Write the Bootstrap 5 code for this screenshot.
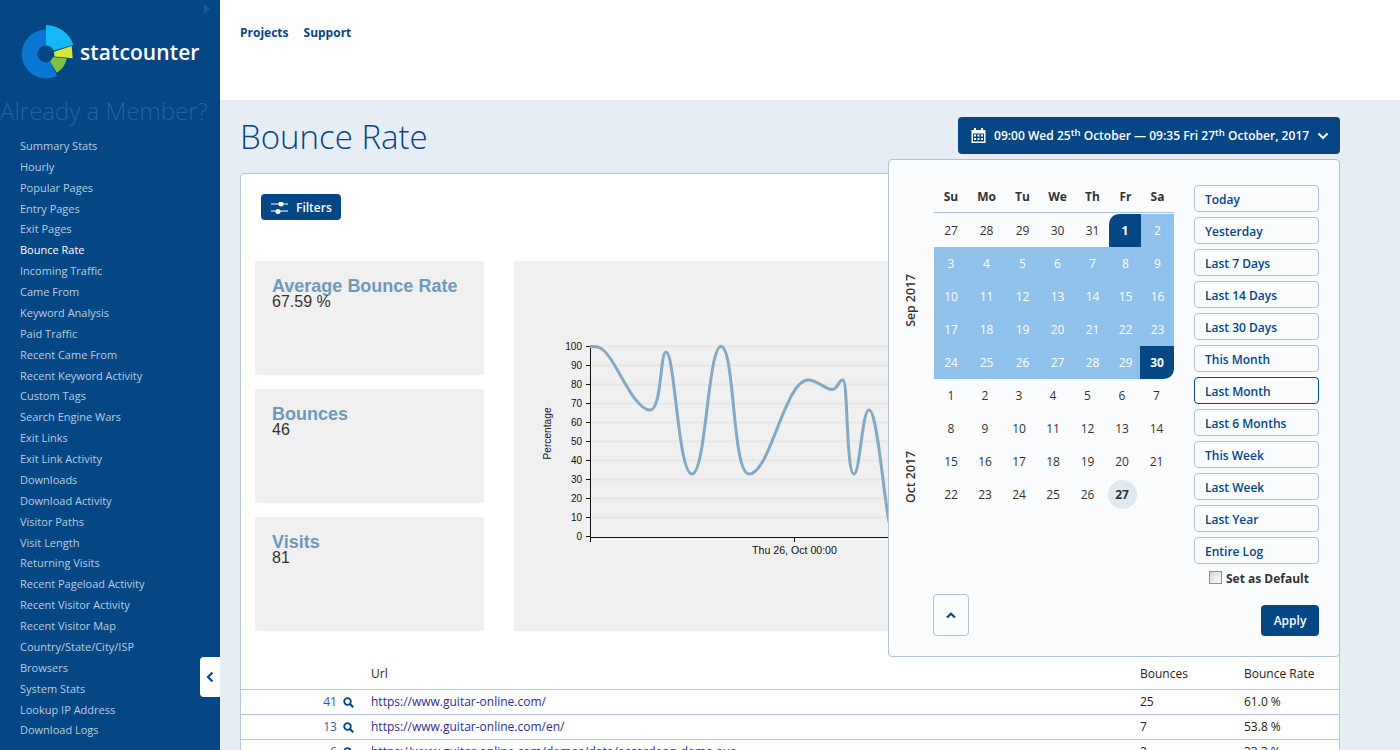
<!DOCTYPE html>
<html lang="en"><head><meta charset="utf-8"><title>Bounce Rate</title>
<link href="https://cdn.jsdelivr.net/npm/bootstrap@5.3.0/dist/css/bootstrap.min.css" rel="stylesheet">
<script src="https://cdn.jsdelivr.net/npm/bootstrap@5.3.0/dist/js/bootstrap.bundle.min.js"></script>
<style>
html,body{height:750px;overflow:hidden}
body{font-family:"Open Sans","Noto Sans",sans-serif;font-size:12px;color:#333;background:#e6edf4}
.shell{height:750px}
.side{width:220px;flex:none;background:#054685;position:relative;height:750px}
.side-arrow{position:absolute;left:204px;top:4px;width:0;height:0;border-left:6px solid #1d5a94;border-top:5.5px solid transparent;border-bottom:5.5px solid transparent}
.brand{height:80px;padding:24px 0 0 21px}
.brand-name{font-size:21px;font-weight:600;color:#fff;margin-left:6px;line-height:1;letter-spacing:.1px}
.member{font-size:24px;font-weight:300;color:#26639e;line-height:34px;margin:14px 0 0;white-space:nowrap}
.side-nav{margin:7.900px 0 0;padding:0 0 0 20px;list-style:none}
.side-nav a{display:block;height:20.89px;line-height:20.89px;font-size:11px;color:#b9cde0;text-decoration:none;white-space:nowrap}
.side-nav a.on{color:#fff}
.tab-toggle{position:absolute;left:200px;top:657px;width:20px;height:40px;background:#fff;border-radius:4px 0 0 4px}
.main{flex:1;min-width:0}
.top{height:100px;background:#fff;padding:24px 0 0 20px;gap:15px}
.top a{font-weight:700;font-size:12px;color:#054685;text-decoration:none;line-height:17px}
.body-wrap{padding:0 60px 0 20px;position:relative}
.title-row{height:73px;padding-top:17px}
.title-row h1{font-size:33px;font-weight:300;color:#054685;margin:0;line-height:40px}
.range-btn{width:382px;height:37px;background:#054685;color:#fff;border-radius:4px;font-size:12.050px;font-weight:600;border:0;padding:0 0 0 13px;gap:8px;white-space:nowrap}
.range-text{padding-top:2px}
.range-btn sup{font-size:9.500px;top:-.5em}
.panel{background:#fff;border:1px solid #b3c6de;border-radius:4px 4px 0 0;height:600px;padding:20px 0 0}
.filter-btn{margin-left:20px;width:80px;height:26px;background:#054685;color:#fff;border:0;border-radius:4px;font-size:12px;font-weight:600;padding:1px 0 0 10px;gap:8px}
.stat-row{margin:41px 0 0 14px;gap:30px}
.stat-col{width:229px;gap:14px}
.stat-box{height:114px;background:#f0f0f0;padding:16px 17px;font-family:"Liberation Sans",Arial,sans-serif;border-radius:2px}
.stat-box h5{font-size:18px;font-weight:700;color:#7099b8;margin:0;line-height:18px}
.stat-box p{font-size:16px;color:#333;margin:0;line-height:13px}
.chart-box{width:806px;height:370px;background:#f0f0f0;border-radius:2px}
.chart-box svg{display:block}
.chart-box text{font-family:"Liberation Sans",Arial,sans-serif;font-size:10px;fill:#111}
.chart-box text.xlab{font-size:10.600px}
.chart-box text.ylab{font-size:10.200px;fill:#14143a}
.data-table{margin:29px 0 0;font-size:12px;width:1098px;table-layout:fixed;--bs-table-bg:transparent}
.data-table th,.data-table td{height:25px;padding:0;border-bottom:1px solid #b3c6de;vertical-align:middle;font-weight:400;color:#222;white-space:nowrap;line-height:24px}
.data-table th{height:29px}
.data-table td.num-cell{text-align:right;padding-right:17px}
.num-cell a{color:#2c5f96;text-decoration:none}
.num-cell svg{margin-left:3px}
.url-cell a{color:#322c8e;text-decoration:none}
.popper{position:absolute;left:668px;top:59px;width:452px;height:498px;background:#fbfcfe;border:1px solid #adc2dc;border-radius:4px;padding:25px 20px 20px 45px;z-index:5}
.vlabel{position:absolute;left:13px;writing-mode:vertical-rl;transform:rotate(180deg);font-size:12.300px;font-weight:600;color:#333;white-space:nowrap;line-height:18px}
.cal{width:240px;position:relative}
.grid-sep,.grid-oct{display:grid;height:33px;align-items:stretch}
.grid-sep{grid-template-columns:34px 37px 35px 35px 35px 31px 33px}
.grid-oct{grid-template-columns:34px 34px 34px 34px 35px 34px 35px}
.dow{height:28px;border-bottom:1px solid #adc2dc;font-weight:700;color:#333;font-size:12px;margin-bottom:1px}
.dow span{display:flex;align-items:flex-start;justify-content:center;line-height:18px;padding-top:3px}
.cell{display:flex;align-items:center;justify-content:center;color:#333;font-size:12px}
.inr{background:#90c1ea;color:#fff}
.edge-a{background:#054685;color:#fff;font-weight:700;border-top-left-radius:10px;margin-left:-1px}
.edge-b{background:#054685;color:#fff;font-weight:700;border-bottom-right-radius:10px;margin-left:-1px}
.today{position:relative;font-weight:700;z-index:0}
.today::before{content:"";position:absolute;left:50%;top:50%;width:29px;height:29px;margin:-14.500px 0 0 -14.500px;border-radius:50%;background:#e0e8f1;z-index:-1}
.presets{width:125px;gap:5px;margin-left:20px}
.preset{display:block;width:125px;height:27px;background:#fbfcfe;border:1px solid #adc2dc;border-radius:4px;color:#054685;font-size:12px;font-weight:600;text-align:left;padding:0 0 0 10px;line-height:28px;text-decoration:none}
.preset.sel{border-color:#054685}
.def-row{font-size:12px;font-weight:700;color:#333;gap:4px;margin:1px 0 0 15px;line-height:18px}
.def-box{width:13px;height:13px;border:1px solid #8f8f8f;background:linear-gradient(135deg,#d4d4d4,#fff);margin-top:-3px}
.up-btn{position:absolute;left:44px;top:434px;width:36px;height:42px;border:1px solid #adc2dc;border-radius:4px;background:#fbfcfe}
.apply-btn{position:absolute;left:372px;top:445px;width:58px;height:31px;background:#054685;color:#fff;border:0;border-radius:4px;font-size:12px;font-weight:600;padding:0}
</style></head>
<body>
<div class="d-flex shell">
<aside class="side">
  <div class="side-arrow"></div>
  <div class="brand d-flex align-items-center">
    <svg width="53" height="56" viewBox="21 24 53 56"><path d="M46 29.500A24.500 24.500 0 1 0 57 76L50 61.500A8.500 8.500 0 1 1 46 45.500Z" fill="#0a78d2"/><path d="M46 25A29 29 0 0 1 73.300 45L53.500 50.500A8.500 8.500 0 0 0 46 45.500Z" fill="#13b9f5"/><path d="M54 51.700L71.700 46 72.700 58.300 54.500 56.500Z" fill="#d6e63a"/><path d="M50 61.500L53.300 57 66.700 58.500A21 21 0 0 1 56.700 72.700Z" fill="#7dc242"/></svg>
    <span class="brand-name">statcounter</span>
  </div>
  <div class="member">Already a Member?</div>
  <ul class="side-nav">
    <li><a href="#">Summary Stats</a></li><li><a href="#">Hourly</a></li><li><a href="#">Popular Pages</a></li><li><a href="#">Entry Pages</a></li><li><a href="#">Exit Pages</a></li><li><a href="#" class="on">Bounce Rate</a></li><li><a href="#">Incoming Traffic</a></li><li><a href="#">Came From</a></li><li><a href="#">Keyword Analysis</a></li><li><a href="#">Paid Traffic</a></li><li><a href="#">Recent Came From</a></li><li><a href="#">Recent Keyword Activity</a></li><li><a href="#">Custom Tags</a></li><li><a href="#">Search Engine Wars</a></li><li><a href="#">Exit Links</a></li><li><a href="#">Exit Link Activity</a></li><li><a href="#">Downloads</a></li><li><a href="#">Download Activity</a></li><li><a href="#">Visitor Paths</a></li><li><a href="#">Visit Length</a></li><li><a href="#">Returning Visits</a></li><li><a href="#">Recent Pageload Activity</a></li><li><a href="#">Recent Visitor Activity</a></li><li><a href="#">Recent Visitor Map</a></li><li><a href="#">Country/State/City/ISP</a></li><li><a href="#">Browsers</a></li><li><a href="#">System Stats</a></li><li><a href="#">Lookup IP Address</a></li><li><a href="#">Download Logs</a></li>
  </ul>
  <div class="tab-toggle d-flex align-items-center justify-content-center"><svg width="8" height="12" viewBox="0 0 8 12"><path d="M6.500 1.500L2 6l4.500 4.500" fill="none" stroke="#054685" stroke-width="2.200"/></svg></div>
</aside>
<div class="main">
  <nav class="top d-flex align-items-start"><a href="#">Projects</a><a href="#">Support</a></nav>
  <div class="body-wrap">
    <div class="title-row d-flex justify-content-between align-items-start">
      <h1>Bounce Rate</h1>
      <button class="range-btn d-flex align-items-center" type="button">
        <svg width="15" height="15" viewBox="0 0 15 15"><path fill="#fff" fill-rule="evenodd" d="M3 0h2v2h5V0h2v2h2.500v13H.5V2H3zM2 5.500v8h11v-8z"/><path fill="#fff" d="M3 6.500h2v2H3zM6.500 6.500h2v2h-2zM10 6.500h2v2h-2zM3 10h2v2H3zM6.500 10h2v2h-2zM10 10h2v2h-2z"/></svg>
        <span class="range-text">09:00 Wed 25<sup>th</sup> October — 09:35 Fri 27<sup>th</sup> October, 2017</span>
        <svg width="12" height="8" viewBox="0 0 12 8"><path d="M1.500 1.500L6 6l4.500-4.500" fill="none" stroke="#fff" stroke-width="2"/></svg>
      </button>
    </div>
    <section class="panel">
      <button class="filter-btn d-flex align-items-center" type="button">
        <svg width="17" height="12" viewBox="0 0 17 12"><path d="M0 2h17M0 9h17" stroke="#fff" stroke-width="1"/><circle cx="10" cy="2" r="2.500" fill="#fff"/><circle cx="7" cy="9.500" r="2.500" fill="#fff"/></svg>
        <span>Filters</span>
      </button>
      <div class="stat-row d-flex">
        <div class="stat-col d-flex flex-column">
          <div class="stat-box"><h5>Average Bounce Rate</h5><p>67.59 %</p></div>
          <div class="stat-box"><h5>Bounces</h5><p>46</p></div>
          <div class="stat-box"><h5>Visits</h5><p>81</p></div>
        </div>
        <div class="chart-box">
          <svg width="806" height="370" viewBox="514 261 806 370">
            <g stroke="#e6e6e6" stroke-width="2"><path d="M590 346.500H1300M590 365.500H1300M590 384.500H1300M590 403.500H1300M590 422.500H1300M590 441.500H1300M590 460.500H1300M590 479.500H1300M590 498.500H1300M590 517.500H1300"/></g>
            <path d="M590.500 346V537.500H1300M590.500 537V542M794.500 537V542" fill="none" stroke="#111" stroke-width="1"/>
            <g stroke="#111" stroke-width="1"><path d="M586 346.500h4M586 365.500h4M586 384.500h4M586 403.500h4M586 422.500h4M586 441.500h4M586 460.500h4M586 479.500h4M586 498.500h4M586 517.500h4M586 536.500h4"/></g>
            <g text-anchor="end"><text x="582" y="350">100</text><text x="582" y="369">90</text><text x="582" y="388">80</text><text x="582" y="407">70</text><text x="582" y="426">60</text><text x="582" y="445">50</text><text x="582" y="464">40</text><text x="582" y="483">30</text><text x="582" y="502">20</text><text x="582" y="521">10</text><text x="582" y="540">0</text></g>
            <text class="ylab" transform="translate(551 433.500) rotate(-90)" text-anchor="middle">Percentage</text>
            <text class="xlab" x="794.500" y="553.500" text-anchor="middle">Thu 26, Oct 00:00</text>
            <path d="M590 346.500C596 346.500 601 345 610 358C620 372 636 410 650 410C662 410 660 352 666 352C675 352 678 474 692 474C706 474 708 346.500 721 346.500C735 346.500 732 474 749 474C770 474 785 380 808 380C818 380 825 389.500 832 389.500C838 389.500 838 380 843 380C848 380 846 474 854 474C860 474 862 410 869 410C877 410 883 490 889 522" fill="none" stroke="#84a9c3" stroke-width="3"/>
          </svg>
        </div>
      </div>
      <table class="table data-table">
        <colgroup><col style="width:130px"><col style="width:769px"><col style="width:104px"><col></colgroup>
        <thead><tr><th></th><th>Url</th><th>Bounces</th><th>Bounce Rate</th></tr></thead>
        <tbody>
          <tr><td class="num-cell"><a href="#">41</a> <svg width="11" height="11" viewBox="0 0 11 11"><circle cx="4.500" cy="4.500" r="3.300" fill="none" stroke="#054685" stroke-width="1.800"/><path d="M7 7l3.200 3.200" stroke="#054685" stroke-width="2.200"/></svg></td><td class="url-cell"><a href="#">https://www.guitar-online.com/</a></td><td>25</td><td>61.0 %</td></tr>
          <tr><td class="num-cell"><a href="#">13</a> <svg width="11" height="11" viewBox="0 0 11 11"><circle cx="4.500" cy="4.500" r="3.300" fill="none" stroke="#054685" stroke-width="1.800"/><path d="M7 7l3.200 3.200" stroke="#054685" stroke-width="2.200"/></svg></td><td class="url-cell"><a href="#">https://www.guitar-online.com/en/</a></td><td>7</td><td>53.8 %</td></tr>
          <tr><td class="num-cell"><a href="#">6</a> <svg width="11" height="11" viewBox="0 0 11 11"><circle cx="4.500" cy="4.500" r="3.300" fill="none" stroke="#054685" stroke-width="1.800"/><path d="M7 7l3.200 3.200" stroke="#054685" stroke-width="2.200"/></svg></td><td class="url-cell"><a href="#">https://www.guitar-online.com/demos/data/accordeon-demo.aus</a></td><td>2</td><td>33.3 %</td></tr>
        </tbody>
      </table>
    </section>
    <div class="popper">
      <div class="d-flex align-items-start">
        <div class="cal">
          <div class="grid-sep dow"><span>Su</span><span>Mo</span><span>Tu</span><span>We</span><span>Th</span><span>Fr</span><span>Sa</span></div>
          <div class="grid-sep"><span class="cell">27</span><span class="cell">28</span><span class="cell">29</span><span class="cell">30</span><span class="cell">31</span><span class="cell edge-a">1</span><span class="cell inr">2</span></div>
          <div class="grid-sep"><span class="cell inr">3</span><span class="cell inr">4</span><span class="cell inr">5</span><span class="cell inr">6</span><span class="cell inr">7</span><span class="cell inr">8</span><span class="cell inr">9</span></div>
          <div class="grid-sep"><span class="cell inr">10</span><span class="cell inr">11</span><span class="cell inr">12</span><span class="cell inr">13</span><span class="cell inr">14</span><span class="cell inr">15</span><span class="cell inr">16</span></div>
          <div class="grid-sep"><span class="cell inr">17</span><span class="cell inr">18</span><span class="cell inr">19</span><span class="cell inr">20</span><span class="cell inr">21</span><span class="cell inr">22</span><span class="cell inr">23</span></div>
          <div class="grid-sep"><span class="cell inr">24</span><span class="cell inr">25</span><span class="cell inr">26</span><span class="cell inr">27</span><span class="cell inr">28</span><span class="cell inr">29</span><span class="cell edge-b">30</span></div>
          <div class="grid-oct"><span class="cell">1</span><span class="cell">2</span><span class="cell">3</span><span class="cell">4</span><span class="cell">5</span><span class="cell">6</span><span class="cell">7</span></div>
          <div class="grid-oct"><span class="cell">8</span><span class="cell">9</span><span class="cell">10</span><span class="cell">11</span><span class="cell">12</span><span class="cell">13</span><span class="cell">14</span></div>
          <div class="grid-oct"><span class="cell">15</span><span class="cell">16</span><span class="cell">17</span><span class="cell">18</span><span class="cell">19</span><span class="cell">20</span><span class="cell">21</span></div>
          <div class="grid-oct"><span class="cell">22</span><span class="cell">23</span><span class="cell">24</span><span class="cell">25</span><span class="cell">26</span><span class="cell today">27</span><span class="cell"></span></div>
        </div>
        <div class="presets d-flex flex-column">
          <a class="preset" href="#">Today</a><a class="preset" href="#">Yesterday</a><a class="preset" href="#">Last 7 Days</a><a class="preset" href="#">Last 14 Days</a><a class="preset" href="#">Last 30 Days</a><a class="preset" href="#">This Month</a><a class="preset sel" href="#">Last Month</a><a class="preset" href="#">Last 6 Months</a><a class="preset" href="#">This Week</a><a class="preset" href="#">Last Week</a><a class="preset" href="#">Last Year</a><a class="preset" href="#">Entire Log</a>
          <div class="def-row d-flex align-items-center"><span class="def-box"></span><span>Set as Default</span></div>
        </div>
      </div>
      <span class="vlabel" style="top:114px">Sep 2017</span>
      <span class="vlabel" style="top:291px">Oct 2017</span>
      <button class="up-btn d-flex align-items-center justify-content-center" type="button"><svg width="10" height="7" viewBox="0 0 10 7"><path d="M1 5.500L5 1.800l4 3.700" fill="none" stroke="#054685" stroke-width="2.200"/></svg></button>
      <button class="apply-btn" type="button">Apply</button>
    </div>
  </div>
</div>
</div>
</body></html>
